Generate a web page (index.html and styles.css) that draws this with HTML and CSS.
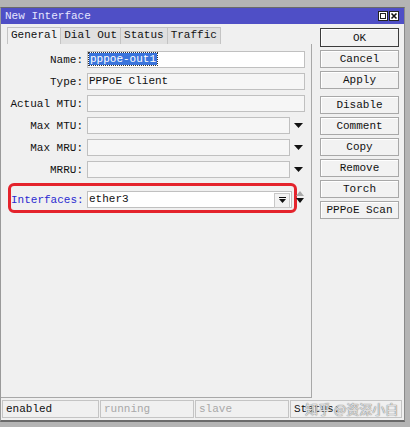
FILE: index.html
```html
<!DOCTYPE html>
<html lang="en">
<head>
    <meta charset="UTF-8">
    <title>New Interface</title>
    <link rel="stylesheet" href="styles.css">
</head>
<body>
    <div class="window">
        <div class="titlebar">
            <span class="title">New Interface</span>
            <div class="wctl">
                <svg width="10" height="10" viewBox="0 0 10 10"><rect x="0.5" y="0.5" width="9" height="9" fill="#fff" stroke="#222"/><rect x="2.5" y="2.5" width="5" height="5" fill="none" stroke="#222"/></svg>
                <svg width="10" height="10" viewBox="0 0 10 10"><rect x="0.5" y="0.5" width="9" height="9" fill="#fff" stroke="#222"/><path d="M2.5 2.5 L7.5 7.5 M7.5 2.5 L2.5 7.5" stroke="#111" stroke-width="1.6"/></svg>
            </div>
        </div>

        <div class="main">
            <div class="left">
                <div class="tabs">
                    <div class="tab active">General</div>
                    <div class="tab">Dial Out</div>
                    <div class="tab">Status</div>
                    <div class="tab">Traffic</div>
                </div>
                <div class="panel">
                    <div class="row">
                        <label>Name:</label>
                        <div class="field white wide"><span class="sel">pppoe-out1</span></div>
                    </div>
                    <div class="row">
                        <label>Type:</label>
                        <div class="field wide">PPPoE Client</div>
                    </div>
                    <div class="row">
                        <label>Actual MTU:</label>
                        <div class="field wide"></div>
                    </div>
                    <div class="row">
                        <label>Max MTU:</label>
                        <div class="field"></div>
                        <svg class="arrow" width="9" height="5" viewBox="0 0 9 5"><path d="M0 0 H9 L4.5 5 Z" fill="#111"/></svg>
                    </div>
                    <div class="row">
                        <label>Max MRU:</label>
                        <div class="field"></div>
                        <svg class="arrow" width="9" height="5" viewBox="0 0 9 5"><path d="M0 0 H9 L4.5 5 Z" fill="#111"/></svg>
                    </div>
                    <div class="row">
                        <label>MRRU:</label>
                        <div class="field"></div>
                        <svg class="arrow" width="9" height="5" viewBox="0 0 9 5"><path d="M0 0 H9 L4.5 5 Z" fill="#111"/></svg>
                    </div>
                    <div class="highlight">
                        <div class="row">
                            <label class="blue">Interfaces:</label>
                            <div class="field white combo">
                                <span>ether3</span>
                                <div class="dropbtn">
                                    <svg width="7" height="7" viewBox="0 0 7 7"><path d="M0 0.5 H7" stroke="#111"/><path d="M0 2 H7 L3.5 6 Z" fill="#111"/></svg>
                                </div>
                            </div>
                        </div>
                    </div>
                    <svg class="spin" width="8" height="12" viewBox="0 0 8 12"><path d="M4 0 L8 5 H0 Z" fill="#aaa"/><path d="M0 7 H8 L4 12 Z" fill="#111"/></svg>
                </div>
            </div>

            <div class="buttons">
                <button class="default">OK</button>
                <button>Cancel</button>
                <button>Apply</button>
                <button class="group">Disable</button>
                <button>Comment</button>
                <button>Copy</button>
                <button>Remove</button>
                <button>Torch</button>
                <button>PPPoE Scan</button>
            </div>
        </div>

        <div class="statusbar">
            <div class="cell c1">enabled</div>
            <div class="cell c2 dim">running</div>
            <div class="cell c3 dim">slave</div>
            <div class="cell c4">Status:</div>
            <div class="watermark">知乎 @资深小白</div>
        </div>
    </div>
</body>
</html>
```

FILE: styles.css
```css
body {
    margin: 0;
    background: #b4b4b4;
    height: 427px;
    overflow: hidden;
    font-family: "Liberation Mono", "DejaVu Sans Mono", monospace;
    font-size: 11px;
    color: #111;
}
.window {
    margin-top: 7px;
    width: 405px;
    height: 415px;
    box-sizing: border-box;
    background: #f0f0f0;
    border-top: 1px solid #6a6a6a;
    border-left: 1px solid #9a9a9a;
    border-right: 1px solid #8a8a8a;
    border-bottom: 2px solid #6a6a6a;
    display: flex;
    flex-direction: column;
}
.titlebar {
    height: 16px;
    background: #4f4fc6;
    color: #e6e6ff;
    display: flex;
    align-items: center;
    justify-content: space-between;
    padding: 0 5px 0 4px;
    flex-shrink: 0;
}
.title { font-size: 11px; }
.wctl { display: flex; gap: 1px; }
.wctl svg { display: block; }

.main { display: flex; flex: 1; min-height: 0; }
.left { width: 311px; display: flex; flex-direction: column; }
.tabs { display: flex; margin: 3px 0 0 6px; height: 17px; }
.tab {
    box-sizing: border-box;
    height: 17px;
    line-height: 15px;
    padding: 0 3px;
    border: 1px solid #c4c4c4;
    border-bottom: none;
    background: #e0e0e0;
    margin-right: -1px;
}
.tab.active { background: #f0f0f0; }
.panel {
    flex: 1;
    border-right: 1px solid #a8a8a8;
    border-bottom: 1px solid #a8a8a8;
    padding-top: 7px;
    position: relative;
}
.row {
    display: flex;
    align-items: center;
    height: 17px;
    margin-bottom: 5px;
}
.row label {
    width: 86px;
    text-align: right;
    padding-right: 4px;
    box-sizing: border-box;
    flex-shrink: 0;
}
.blue { color: #2a2ad0; }
.field {
    box-sizing: border-box;
    width: 203px;
    height: 17px;
    line-height: 15px;
    border: 1px solid #c0c0c0;
    background: #f6f6f6;
    padding: 0 1px;
}
.field.wide { width: 218px; }
.field.white { background: #fff; }
.arrow { margin-left: 4px; }
.sel {
    background: #3a74dc;
    color: #fff;
    outline: 1px dotted #333;
    padding: 0 1px;
}
.highlight {
    margin: 3px 0 0 7px;
    width: 289px;
    height: 30px;
    box-sizing: border-box;
    border: 3px solid #e4232c;
    border-radius: 6px;
    padding-top: 5px;
}
.highlight .row label { width: 76px; }
.highlight .field { width: 205px; }
.combo { display: flex; justify-content: space-between; }
.dropbtn {
    width: 14px;
    height: 13px;
    margin-top: 1px;
    border: 1px solid #c8c8c8;
    background: #f2f2f2;
    display: flex;
    align-items: center;
    justify-content: center;
}
.dropbtn svg { display: block; }
.spin { position: absolute; left: 295px; top: 147px; }

.buttons {
    margin: 4px 0 0 8px;
    width: 79px;
    display: flex;
    flex-direction: column;
    gap: 3px;
}
button {
    font-family: inherit;
    font-size: 11px;
    color: #111;
    height: 18px;
    padding: 0;
    background: #f2f2f2;
    border: 1px solid #a8a8a8;
    box-shadow: inset 1px 1px 0 #fff;
}
button.default { border-color: #3c3c3c; height: 19px; }
button.group { margin-top: 4px; }

.statusbar {
    height: 22px;
    box-sizing: border-box;
    padding: 2px 2px 2px 1px;
    display: flex;
    position: relative;
    flex-shrink: 0;
}
.cell {
    box-sizing: border-box;
    height: 18px;
    line-height: 16px;
    border: 1px solid #c4c4c4;
    padding: 0 3px;
    margin-right: 1px;
}
.c1 { width: 97px; }
.c2 { width: 94px; }
.c3 { width: 94px; }
.c4 { flex: 1; margin-right: 0; }
.dim { color: #a8a8a8; }
.watermark {
    position: absolute;
    left: 304px;
    top: 3px;
    white-space: nowrap;
    font-family: "Noto Sans CJK SC", sans-serif;
    font-size: 13px;
    line-height: 15px;
    color: rgba(255, 255, 255, 0.75);
    text-shadow: 0 0 1px #777, 0 0 1px #777;
}
```
